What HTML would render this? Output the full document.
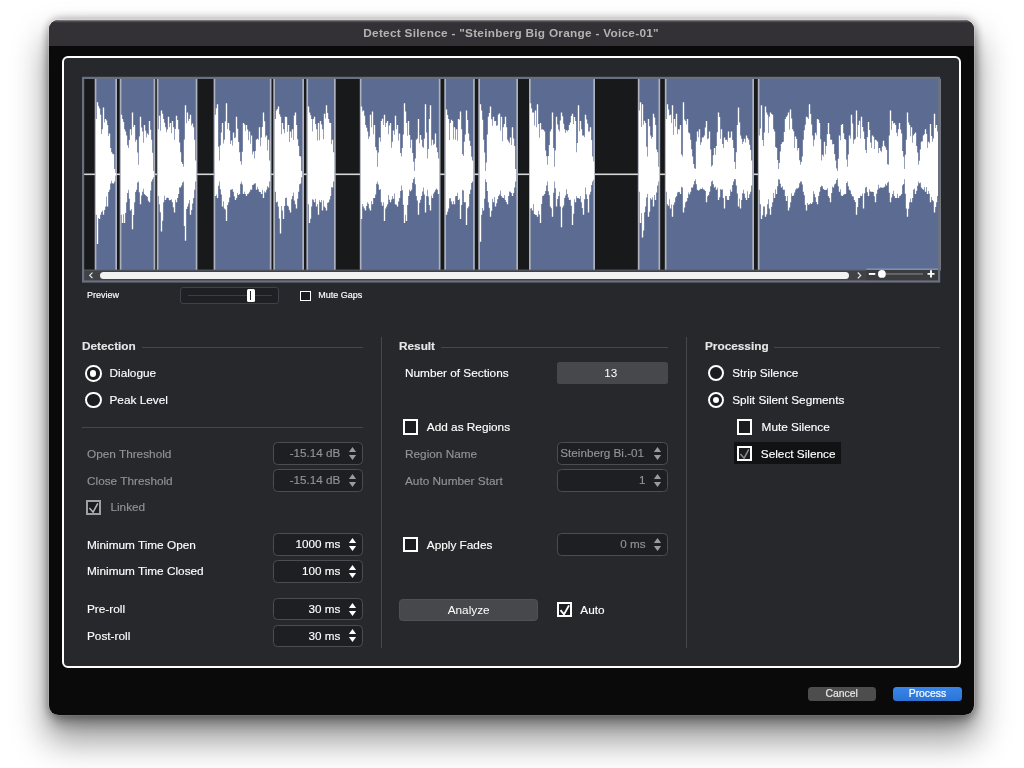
<!DOCTYPE html>
<html><head><meta charset="utf-8">
<style>
*{box-sizing:border-box;margin:0;padding:0}
html,body{width:1024px;height:768px;overflow:hidden;background:#fff;font-family:"Liberation Sans",sans-serif;}
#shadow{position:absolute;left:49.6px;top:20.3px;width:924.4px;height:694.5px;border-radius:9.5px;box-shadow:0 22px 34px 4px rgba(0,0,0,.40),0 9px 14px 0 rgba(0,0,0,.28),0 0 10px 1px rgba(0,0,0,.36);}
#win{position:absolute;left:49.3px;top:20px;width:925px;height:694.5px;background:#0a0a0a;border-radius:9.5px;overflow:hidden;
 box-shadow:0 -0.5px 0 0.7px rgba(255,255,255,.3);}
#tb{position:absolute;left:0;top:0;width:926px;height:26px;background:linear-gradient(#8d8b90 0,#58565b 1.2px,#333136 2.8px,#333136 100%);}
#tb span{position:absolute;left:-0.7px;width:925px;top:6px;text-align:center;font-weight:bold;font-size:11.8px;color:#b3b3b3;letter-spacing:0.28px}
#panel{position:absolute;left:61.5px;top:56.3px;width:899.1px;height:612.2px;border:2.25px solid #fff;border-radius:6px;background:#26282c;}
.abs{position:absolute}
.t,.f,.h{-webkit-text-stroke:0.15px}
.t{position:absolute;font-size:11.8px;color:#fff;white-space:nowrap;line-height:14px;height:14px}
.s{font-size:9px}
.g{color:#929396}
.h{position:absolute;font-size:11.8px;font-weight:bold;color:#e6e6e6;white-space:nowrap;line-height:14px;height:14px}
.ln{position:absolute;height:1px;background:#45474c}
.vl{position:absolute;width:1px;background:#45474c}
.f{position:absolute;width:90px;height:22.5px;border:1.8px solid #4b4d53;border-radius:4.5px;background:#1d1f22;font-size:11.7px;color:#fff;line-height:20.4px;text-align:right;padding-right:21.6px;white-space:nowrap}
.f.g{color:#929396}
.f svg{position:absolute;right:5.3px;top:2.9px}
.cb{position:absolute;width:15.4px;height:15.4px;border:2px solid #fff;background:#1b1c1f}
.cb svg{position:absolute;left:-2px;top:-2px}
.rd{position:absolute;width:16.4px;height:16.4px;border:2px solid #fff;border-radius:50%;background:#1b1c1f}
.rd.on::after{content:"";position:absolute;left:3.1px;top:3.1px;width:6.2px;height:6.2px;border-radius:50%;background:#fff}
.btn{-webkit-text-stroke:0.2px;position:absolute;height:14px;border-radius:3.5px;font-size:10.4px;line-height:14px;text-align:center;color:#e8e8e8}
</style></head><body><div id="root" style="position:absolute;left:0;top:0;width:1024px;height:768px;will-change:transform">
<div id="shadow"></div>
<div id="win">
 <div id="tb"><span>Detect Silence - "Steinberg Big Orange - Voice-01"</span></div>
</div>
<div id="panel"></div>

<svg class="abs" style="left:0;top:0" width="1024" height="768" viewBox="0 0 1024 768">
<rect x="83" y="78" width="857" height="204" fill="#18191b"/>
<rect x="84" y="173.5" width="856" height="1.6" fill="#d8d8d8"/>
<rect x="94.70" y="79" width="22.30" height="191.5" fill="#adb1bd"/>
<rect x="96.40" y="79" width="18.90" height="191.5" fill="#5b6b92"/>
<rect x="119.70" y="79" width="35.60" height="191.5" fill="#adb1bd"/>
<rect x="121.40" y="79" width="32.20" height="191.5" fill="#5b6b92"/>
<rect x="156.80" y="79" width="40.60" height="191.5" fill="#adb1bd"/>
<rect x="158.50" y="79" width="37.20" height="191.5" fill="#5b6b92"/>
<rect x="213.60" y="79" width="57.90" height="191.5" fill="#adb1bd"/>
<rect x="215.30" y="79" width="54.50" height="191.5" fill="#5b6b92"/>
<rect x="273.30" y="79" width="30.70" height="191.5" fill="#adb1bd"/>
<rect x="275.00" y="79" width="27.30" height="191.5" fill="#5b6b92"/>
<rect x="306.40" y="79" width="29.30" height="191.5" fill="#adb1bd"/>
<rect x="308.10" y="79" width="25.90" height="191.5" fill="#5b6b92"/>
<rect x="359.80" y="79" width="80.70" height="191.5" fill="#adb1bd"/>
<rect x="361.50" y="79" width="77.30" height="191.5" fill="#5b6b92"/>
<rect x="444.30" y="79" width="30.50" height="191.5" fill="#adb1bd"/>
<rect x="446.00" y="79" width="27.10" height="191.5" fill="#5b6b92"/>
<rect x="478.30" y="79" width="39.70" height="191.5" fill="#adb1bd"/>
<rect x="480.00" y="79" width="36.30" height="191.5" fill="#5b6b92"/>
<rect x="529.00" y="79" width="66.00" height="191.5" fill="#adb1bd"/>
<rect x="530.70" y="79" width="62.60" height="191.5" fill="#5b6b92"/>
<rect x="637.80" y="79" width="22.40" height="191.5" fill="#adb1bd"/>
<rect x="639.50" y="79" width="19.00" height="191.5" fill="#5b6b92"/>
<rect x="664.80" y="79" width="89.20" height="191.5" fill="#adb1bd"/>
<rect x="666.50" y="79" width="85.80" height="191.5" fill="#5b6b92"/>
<rect x="757.80" y="79" width="182.80" height="191.5" fill="#adb1bd"/>
<rect x="759.50" y="79" width="179.40" height="191.5" fill="#5b6b92"/>
<path fill="#fff" d="M95.82 118.9h1.36V214.7h-1.36zM96.82 102.2h1.36V243.9h-1.36zM97.82 106.2h1.36V218.0h-1.36zM98.82 108.5h1.36V218.9h-1.36zM99.82 114.7h1.36V214.7h-1.36zM100.82 133.9h1.36V211.9h-1.36zM101.82 129.3h1.36V210.6h-1.36zM102.82 107.4h1.36V214.7h-1.36zM103.82 122.6h1.36V209.9h-1.36zM104.82 118.9h1.36V206.4h-1.36zM105.82 120.6h1.36V196.4h-1.36zM106.82 125.1h1.36V206.4h-1.36zM107.82 136.0h1.36V191.9h-1.36zM108.82 133.5h1.36V189.7h-1.36zM109.82 148.1h1.36V183.5h-1.36zM110.82 152.2h1.36V180.7h-1.36zM111.82 153.7h1.36V183.3h-1.36zM112.82 154.3h1.36V183.5h-1.36zM113.82 168.9h1.36V181.4h-1.36zM114.82 173.1h1.36V175.6h-1.36z"/>
<path fill="#fff" d="M120.82 114.7h1.36V214.7h-1.36zM121.82 118.9h1.36V223.1h-1.36zM122.82 122.0h1.36V214.3h-1.36zM123.82 129.3h1.36V223.1h-1.36zM124.82 131.5h1.36V212.9h-1.36zM125.82 135.6h1.36V202.2h-1.36zM126.82 145.2h1.36V192.9h-1.36zM127.82 148.1h1.36V189.7h-1.36zM128.82 140.1h1.36V198.7h-1.36zM129.82 129.3h1.36V210.6h-1.36zM130.82 135.3h1.36V208.9h-1.36zM131.82 112.6h1.36V229.3h-1.36zM132.82 126.9h1.36V215.1h-1.36zM133.82 125.1h1.36V202.2h-1.36zM134.82 141.7h1.36V191.9h-1.36zM135.82 139.7h1.36V189.7h-1.36zM136.82 152.5h1.36V182.5h-1.36zM137.82 164.7h1.36V181.4h-1.36zM138.82 136.5h1.36V192.3h-1.36zM139.82 116.8h1.36V204.3h-1.36zM140.82 127.6h1.36V195.4h-1.36zM141.82 131.4h1.36V191.8h-1.36zM142.82 142.7h1.36V188.8h-1.36zM143.82 125.1h1.36V193.9h-1.36zM144.82 130.7h1.36V195.0h-1.36zM145.82 137.6h1.36V196.0h-1.36zM146.82 133.6h1.36V196.8h-1.36zM147.82 135.1h1.36V200.8h-1.36zM148.82 121.0h1.36V202.2h-1.36zM149.82 129.8h1.36V190.4h-1.36zM150.82 139.7h1.36V181.4h-1.36zM151.82 152.8h1.36V179.3h-1.36zM152.82 171.0h1.36V177.2h-1.36z"/>
<path fill="#fff" d="M157.82 129.3h1.36V196.0h-1.36zM158.82 115.8h1.36V204.3h-1.36zM159.82 130.7h1.36V212.3h-1.36zM160.82 110.6h1.36V231.4h-1.36zM161.82 113.8h1.36V220.8h-1.36zM162.82 118.9h1.36V202.2h-1.36zM163.82 122.7h1.36V195.7h-1.36zM164.82 127.2h1.36V200.1h-1.36zM165.82 132.3h1.36V198.1h-1.36zM166.82 129.4h1.36V197.5h-1.36zM167.82 116.8h1.36V198.1h-1.36zM168.82 127.3h1.36V200.2h-1.36zM169.82 123.1h1.36V200.1h-1.36zM170.82 133.3h1.36V199.3h-1.36zM171.82 121.0h1.36V202.2h-1.36zM172.82 127.2h1.36V207.2h-1.36zM173.82 139.7h1.36V212.6h-1.36zM174.82 128.9h1.36V199.7h-1.36zM175.82 115.8h1.36V202.2h-1.36zM176.82 119.9h1.36V198.0h-1.36zM177.82 129.3h1.36V193.9h-1.36zM178.82 142.5h1.36V187.3h-1.36zM179.82 152.2h1.36V187.6h-1.36zM180.82 161.9h1.36V185.4h-1.36zM181.82 164.1h1.36V182.6h-1.36zM182.82 166.8h1.36V181.4h-1.36zM183.82 139.5h1.36V225.9h-1.36zM184.82 105.3h1.36V240.8h-1.36zM185.82 123.2h1.36V209.1h-1.36zM186.82 112.6h1.36V206.4h-1.36zM187.82 121.0h1.36V203.5h-1.36zM188.82 118.9h1.36V200.1h-1.36zM189.82 114.7h1.36V214.7h-1.36zM190.82 125.4h1.36V210.1h-1.36zM191.82 123.5h1.36V203.4h-1.36zM192.82 127.2h1.36V198.1h-1.36zM193.82 139.7h1.36V189.7h-1.36zM194.82 160.6h1.36V181.4h-1.36z"/>
<path fill="#fff" d="M214.82 114.7h1.36V196.0h-1.36zM215.82 108.2h1.36V194.6h-1.36zM216.82 104.3h1.36V198.1h-1.36zM217.82 146.8h1.36V185.8h-1.36zM218.82 160.6h1.36V181.4h-1.36zM219.82 145.3h1.36V189.2h-1.36zM220.82 132.6h1.36V194.5h-1.36zM221.82 123.1h1.36V206.4h-1.36zM222.82 143.4h1.36V201.3h-1.36zM223.82 139.7h1.36V208.5h-1.36zM224.82 121.3h1.36V209.6h-1.36zM225.82 103.3h1.36V221.0h-1.36zM226.82 128.9h1.36V205.0h-1.36zM227.82 123.1h1.36V202.2h-1.36zM228.82 130.6h1.36V197.4h-1.36zM229.82 143.9h1.36V189.7h-1.36zM230.82 140.6h1.36V189.5h-1.36zM231.82 145.4h1.36V189.1h-1.36zM232.82 132.4h1.36V191.8h-1.36zM233.82 138.2h1.36V196.3h-1.36zM234.82 137.6h1.36V200.1h-1.36zM235.82 116.8h1.36V198.1h-1.36zM236.82 128.8h1.36V193.0h-1.36zM237.82 141.9h1.36V195.1h-1.36zM238.82 152.2h1.36V193.9h-1.36zM239.82 161.3h1.36V183.8h-1.36zM240.82 164.7h1.36V181.4h-1.36zM241.82 151.8h1.36V184.4h-1.36zM242.82 123.1h1.36V193.9h-1.36zM243.82 124.4h1.36V191.8h-1.36zM244.82 131.0h1.36V194.1h-1.36zM245.82 125.1h1.36V196.0h-1.36zM246.82 129.5h1.36V193.9h-1.36zM247.82 140.3h1.36V193.6h-1.36zM248.82 131.4h1.36V191.8h-1.36zM249.82 143.7h1.36V189.5h-1.36zM250.82 135.6h1.36V189.7h-1.36zM251.82 154.4h1.36V184.9h-1.36zM252.82 151.6h1.36V184.5h-1.36zM253.82 158.5h1.36V183.5h-1.36zM254.82 151.0h1.36V183.3h-1.36zM255.82 139.7h1.36V189.7h-1.36zM256.82 138.8h1.36V186.8h-1.36zM257.82 139.8h1.36V189.3h-1.36zM258.82 127.2h1.36V191.8h-1.36zM259.82 146.2h1.36V192.0h-1.36zM260.82 137.6h1.36V193.9h-1.36zM261.82 126.9h1.36V189.8h-1.36zM262.82 112.6h1.36V198.1h-1.36zM263.82 121.2h1.36V191.2h-1.36zM264.82 137.3h1.36V192.4h-1.36zM265.82 135.6h1.36V189.7h-1.36zM266.82 150.5h1.36V186.1h-1.36zM267.82 139.7h1.36V187.6h-1.36zM268.82 160.6h1.36V181.4h-1.36z"/>
<path fill="#fff" d="M274.82 118.9h1.36V191.8h-1.36zM275.82 110.6h1.36V202.2h-1.36zM276.82 108.9h1.36V201.6h-1.36zM277.82 106.4h1.36V206.4h-1.36zM278.82 114.2h1.36V218.4h-1.36zM279.82 116.8h1.36V233.5h-1.36zM280.82 134.3h1.36V205.9h-1.36zM281.82 123.1h1.36V210.6h-1.36zM282.82 129.3h1.36V218.9h-1.36zM283.82 133.3h1.36V206.1h-1.36zM284.82 116.8h1.36V198.1h-1.36zM285.82 117.1h1.36V197.6h-1.36zM286.82 131.8h1.36V205.5h-1.36zM287.82 125.1h1.36V206.4h-1.36zM288.82 142.0h1.36V210.1h-1.36zM289.82 131.4h1.36V212.6h-1.36zM290.82 137.8h1.36V199.2h-1.36zM291.82 129.3h1.36V196.0h-1.36zM292.82 140.1h1.36V192.4h-1.36zM293.82 115.6h1.36V200.5h-1.36zM294.82 112.6h1.36V204.3h-1.36zM295.82 125.1h1.36V208.5h-1.36zM296.82 139.2h1.36V198.7h-1.36zM297.82 146.0h1.36V191.8h-1.36zM298.82 156.0h1.36V184.2h-1.36zM299.82 156.4h1.36V183.5h-1.36zM300.82 171.0h1.36V177.2h-1.36z"/>
<path fill="#fff" d="M307.82 106.4h1.36V204.3h-1.36zM308.82 112.6h1.36V223.1h-1.36zM309.82 115.2h1.36V218.7h-1.36zM310.82 118.9h1.36V206.4h-1.36zM311.82 131.5h1.36V199.2h-1.36zM312.82 119.1h1.36V199.8h-1.36zM313.82 116.8h1.36V202.2h-1.36zM314.82 124.1h1.36V198.8h-1.36zM315.82 129.3h1.36V206.4h-1.36zM316.82 140.5h1.36V204.0h-1.36zM317.82 123.1h1.36V214.7h-1.36zM318.82 140.3h1.36V200.2h-1.36zM319.82 121.0h1.36V202.2h-1.36zM320.82 124.6h1.36V200.1h-1.36zM321.82 129.3h1.36V210.6h-1.36zM322.82 139.3h1.36V200.5h-1.36zM323.82 113.7h1.36V206.4h-1.36zM324.82 118.5h1.36V207.8h-1.36zM325.82 105.3h1.36V210.6h-1.36zM326.82 113.1h1.36V202.8h-1.36zM327.82 118.9h1.36V202.2h-1.36zM328.82 122.7h1.36V199.6h-1.36zM329.82 123.1h1.36V196.0h-1.36zM330.82 144.2h1.36V187.0h-1.36zM331.82 139.7h1.36V187.6h-1.36zM332.82 152.2h1.36V181.4h-1.36z"/>
<path fill="#fff" d="M360.82 106.4h1.36V218.9h-1.36zM361.82 111.4h1.36V204.0h-1.36zM362.82 110.6h1.36V206.4h-1.36zM363.82 115.8h1.36V208.4h-1.36zM364.82 125.1h1.36V210.6h-1.36zM365.82 127.8h1.36V206.1h-1.36zM366.82 131.4h1.36V202.2h-1.36zM367.82 138.9h1.36V203.8h-1.36zM368.82 136.6h1.36V208.6h-1.36zM369.82 114.7h1.36V210.6h-1.36zM370.82 127.3h1.36V201.0h-1.36zM371.82 111.6h1.36V204.3h-1.36zM372.82 134.2h1.36V198.0h-1.36zM373.82 125.1h1.36V198.1h-1.36zM374.82 146.9h1.36V194.5h-1.36zM375.82 150.3h1.36V183.7h-1.36zM376.82 166.8h1.36V181.4h-1.36zM377.82 152.5h1.36V184.6h-1.36zM378.82 137.6h1.36V189.7h-1.36zM379.82 141.7h1.36V189.1h-1.36zM380.82 121.0h1.36V202.2h-1.36zM381.82 118.7h1.36V205.8h-1.36zM382.82 125.1h1.36V202.3h-1.36zM383.82 114.7h1.36V221.0h-1.36zM384.82 127.1h1.36V208.4h-1.36zM385.82 123.0h1.36V206.6h-1.36zM386.82 121.0h1.36V204.3h-1.36zM387.82 134.3h1.36V195.0h-1.36zM388.82 125.4h1.36V199.7h-1.36zM389.82 123.1h1.36V202.2h-1.36zM390.82 147.8h1.36V199.5h-1.36zM391.82 141.8h1.36V196.0h-1.36zM392.82 130.6h1.36V198.8h-1.36zM393.82 134.7h1.36V193.6h-1.36zM394.82 115.8h1.36V204.3h-1.36zM395.82 129.3h1.36V204.8h-1.36zM396.82 125.1h1.36V206.4h-1.36zM397.82 140.4h1.36V201.5h-1.36zM398.82 133.5h1.36V198.1h-1.36zM399.82 153.0h1.36V191.0h-1.36zM400.82 156.4h1.36V185.6h-1.36zM401.82 147.9h1.36V190.2h-1.36zM402.82 134.4h1.36V204.8h-1.36zM403.82 103.3h1.36V223.1h-1.36zM404.82 111.6h1.36V214.8h-1.36zM405.82 123.1h1.36V221.0h-1.36zM406.82 135.8h1.36V205.1h-1.36zM407.82 121.0h1.36V196.0h-1.36zM408.82 135.0h1.36V189.5h-1.36zM409.82 147.9h1.36V191.3h-1.36zM410.82 139.7h1.36V189.7h-1.36zM411.82 153.0h1.36V182.8h-1.36zM412.82 161.7h1.36V179.1h-1.36zM413.82 171.0h1.36V177.2h-1.36zM414.82 158.6h1.36V184.3h-1.36zM415.82 139.7h1.36V196.0h-1.36zM416.82 138.6h1.36V200.6h-1.36zM417.82 118.9h1.36V214.7h-1.36zM418.82 143.3h1.36V202.8h-1.36zM419.82 135.1h1.36V199.7h-1.36zM420.82 139.7h1.36V196.0h-1.36zM421.82 146.7h1.36V191.6h-1.36zM422.82 148.1h1.36V187.6h-1.36zM423.82 138.7h1.36V194.4h-1.36zM424.82 104.3h1.36V212.6h-1.36zM425.82 132.5h1.36V195.9h-1.36zM426.82 158.5h1.36V189.7h-1.36zM427.82 149.1h1.36V196.4h-1.36zM428.82 119.1h1.36V205.1h-1.36zM429.82 105.3h1.36V210.6h-1.36zM430.82 145.4h1.36V195.4h-1.36zM431.82 139.7h1.36V198.1h-1.36zM432.82 145.0h1.36V193.4h-1.36zM433.82 143.8h1.36V191.8h-1.36zM434.82 133.5h1.36V189.7h-1.36zM435.82 147.4h1.36V188.6h-1.36zM436.82 152.2h1.36V189.7h-1.36zM437.82 158.5h1.36V193.9h-1.36z"/>
<path fill="#fff" d="M445.82 109.5h1.36V214.7h-1.36zM446.82 115.0h1.36V211.7h-1.36zM447.82 118.9h1.36V208.5h-1.36zM448.82 140.0h1.36V198.5h-1.36zM449.82 123.1h1.36V198.1h-1.36zM450.82 119.8h1.36V201.4h-1.36zM451.82 121.0h1.36V204.3h-1.36zM452.82 139.6h1.36V200.9h-1.36zM453.82 127.2h1.36V204.3h-1.36zM454.82 139.7h1.36V196.2h-1.36zM455.82 129.3h1.36V196.0h-1.36zM456.82 140.8h1.36V192.8h-1.36zM457.82 118.9h1.36V200.1h-1.36zM458.82 119.8h1.36V198.7h-1.36zM459.82 111.6h1.36V218.9h-1.36zM460.82 129.2h1.36V205.1h-1.36zM461.82 154.3h1.36V189.7h-1.36zM462.82 156.0h1.36V190.4h-1.36zM463.82 141.8h1.36V202.2h-1.36zM464.82 134.5h1.36V201.9h-1.36zM465.82 110.6h1.36V225.1h-1.36zM466.82 120.1h1.36V208.2h-1.36zM467.82 133.5h1.36V206.4h-1.36zM468.82 140.8h1.36V193.9h-1.36zM469.82 146.0h1.36V189.7h-1.36zM470.82 156.7h1.36V182.9h-1.36zM471.82 160.6h1.36V181.4h-1.36z"/>
<path fill="#fff" d="M479.82 104.3h1.36V241.8h-1.36zM480.82 110.6h1.36V214.7h-1.36zM481.82 119.7h1.36V208.1h-1.36zM482.82 139.7h1.36V210.6h-1.36zM483.82 152.6h1.36V198.7h-1.36zM484.82 171.0h1.36V179.3h-1.36zM485.82 162.5h1.36V182.0h-1.36zM486.82 134.5h1.36V190.9h-1.36zM487.82 116.8h1.36V202.2h-1.36zM488.82 113.0h1.36V207.8h-1.36zM489.82 106.4h1.36V216.8h-1.36zM490.82 119.3h1.36V210.7h-1.36zM491.82 125.7h1.36V198.7h-1.36zM492.82 116.8h1.36V202.2h-1.36zM493.82 121.3h1.36V197.0h-1.36zM494.82 121.0h1.36V206.4h-1.36zM495.82 126.0h1.36V203.2h-1.36zM496.82 125.2h1.36V199.3h-1.36zM497.82 114.7h1.36V196.0h-1.36zM498.82 113.4h1.36V194.5h-1.36zM499.82 130.4h1.36V190.5h-1.36zM500.82 116.8h1.36V196.0h-1.36zM501.82 141.2h1.36V197.6h-1.36zM502.82 127.2h1.36V198.1h-1.36zM503.82 124.0h1.36V195.0h-1.36zM504.82 116.8h1.36V200.1h-1.36zM505.82 127.2h1.36V201.9h-1.36zM506.82 139.7h1.36V204.3h-1.36zM507.82 141.5h1.36V196.1h-1.36zM508.82 143.2h1.36V191.4h-1.36zM509.82 137.6h1.36V191.8h-1.36zM510.82 144.9h1.36V193.1h-1.36zM511.82 127.2h1.36V196.0h-1.36zM512.82 138.5h1.36V193.0h-1.36zM513.82 146.0h1.36V187.6h-1.36zM514.82 168.9h1.36V181.4h-1.36z"/>
<path fill="#fff" d="M529.82 103.3h1.36V208.5h-1.36zM530.82 108.5h1.36V208.1h-1.36zM531.82 112.6h1.36V210.6h-1.36zM532.82 112.6h1.36V204.0h-1.36zM533.82 125.5h1.36V213.9h-1.36zM534.82 110.6h1.36V214.7h-1.36zM535.82 127.3h1.36V215.1h-1.36zM536.82 104.3h1.36V216.8h-1.36zM537.82 124.0h1.36V210.7h-1.36zM538.82 137.8h1.36V214.6h-1.36zM539.82 123.1h1.36V223.1h-1.36zM540.82 129.8h1.36V203.9h-1.36zM541.82 129.3h1.36V196.0h-1.36zM542.82 130.0h1.36V195.5h-1.36zM543.82 131.4h1.36V193.9h-1.36zM544.82 150.4h1.36V190.9h-1.36zM545.82 156.3h1.36V185.6h-1.36zM546.82 164.7h1.36V181.4h-1.36zM547.82 155.9h1.36V191.2h-1.36zM548.82 144.9h1.36V195.2h-1.36zM549.82 131.4h1.36V206.4h-1.36zM550.82 129.2h1.36V208.2h-1.36zM551.82 112.6h1.36V216.8h-1.36zM552.82 147.9h1.36V192.7h-1.36zM553.82 166.8h1.36V181.4h-1.36zM554.82 150.4h1.36V188.3h-1.36zM555.82 116.8h1.36V206.4h-1.36zM556.82 124.5h1.36V199.1h-1.36zM557.82 129.4h1.36V196.0h-1.36zM558.82 131.4h1.36V191.8h-1.36zM559.82 120.6h1.36V206.4h-1.36zM560.82 112.6h1.36V227.2h-1.36zM561.82 116.2h1.36V207.5h-1.36zM562.82 123.7h1.36V205.5h-1.36zM563.82 129.3h1.36V198.1h-1.36zM564.82 133.0h1.36V195.4h-1.36zM565.82 130.3h1.36V189.3h-1.36zM566.82 131.4h1.36V193.9h-1.36zM567.82 130.1h1.36V197.6h-1.36zM568.82 125.1h1.36V200.1h-1.36zM569.82 122.6h1.36V199.7h-1.36zM570.82 115.9h1.36V205.7h-1.36zM571.82 113.7h1.36V225.1h-1.36zM572.82 124.1h1.36V213.8h-1.36zM573.82 117.1h1.36V199.2h-1.36zM574.82 121.0h1.36V202.2h-1.36zM575.82 152.2h1.36V196.0h-1.36zM576.82 143.1h1.36V197.9h-1.36zM577.82 105.3h1.36V198.1h-1.36zM578.82 131.2h1.36V198.8h-1.36zM579.82 120.9h1.36V196.0h-1.36zM580.82 129.3h1.36V202.2h-1.36zM581.82 135.5h1.36V208.1h-1.36zM582.82 135.6h1.36V214.7h-1.36zM583.82 137.3h1.36V199.3h-1.36zM584.82 114.7h1.36V187.6h-1.36zM585.82 119.4h1.36V194.2h-1.36zM586.82 123.7h1.36V199.0h-1.36zM587.82 131.4h1.36V212.6h-1.36zM588.82 131.5h1.36V194.5h-1.36zM589.82 127.2h1.36V191.8h-1.36zM590.82 140.1h1.36V184.9h-1.36zM591.82 156.4h1.36V181.4h-1.36zM592.82 161.5h1.36V179.8h-1.36z"/>
<path fill="#fff" d="M638.82 110.6h1.36V191.8h-1.36zM639.82 102.2h1.36V223.1h-1.36zM640.82 127.0h1.36V213.1h-1.36zM641.82 104.3h1.36V237.6h-1.36zM642.82 124.7h1.36V230.4h-1.36zM643.82 120.8h1.36V212.3h-1.36zM644.82 123.1h1.36V206.4h-1.36zM645.82 146.7h1.36V197.6h-1.36zM646.82 156.4h1.36V193.9h-1.36zM647.82 118.9h1.36V216.8h-1.36zM648.82 126.3h1.36V211.7h-1.36zM649.82 135.6h1.36V198.1h-1.36zM650.82 138.8h1.36V199.5h-1.36zM651.82 137.1h1.36V197.2h-1.36zM652.82 113.7h1.36V206.4h-1.36zM653.82 117.4h1.36V195.0h-1.36zM654.82 125.1h1.36V200.1h-1.36zM655.82 149.4h1.36V192.4h-1.36zM656.82 152.2h1.36V185.6h-1.36zM657.82 166.8h1.36V181.4h-1.36z"/>
<path fill="#fff" d="M665.82 118.9h1.36V191.8h-1.36zM666.82 104.3h1.36V204.3h-1.36zM667.82 109.6h1.36V205.7h-1.36zM668.82 115.6h1.36V199.3h-1.36zM669.82 114.7h1.36V208.5h-1.36zM670.82 122.9h1.36V204.5h-1.36zM671.82 105.3h1.36V216.8h-1.36zM672.82 134.7h1.36V204.7h-1.36zM673.82 118.9h1.36V202.2h-1.36zM674.82 126.7h1.36V197.6h-1.36zM675.82 113.7h1.36V196.0h-1.36zM676.82 134.2h1.36V192.5h-1.36zM677.82 129.3h1.36V191.8h-1.36zM678.82 129.4h1.36V191.9h-1.36zM679.82 125.1h1.36V193.9h-1.36zM680.82 154.5h1.36V186.7h-1.36zM681.82 156.4h1.36V187.6h-1.36zM682.82 102.2h1.36V212.6h-1.36zM683.82 119.6h1.36V207.6h-1.36zM684.82 121.0h1.36V202.2h-1.36zM685.82 124.5h1.36V201.2h-1.36zM686.82 118.9h1.36V198.1h-1.36zM687.82 132.4h1.36V192.4h-1.36zM688.82 133.6h1.36V194.2h-1.36zM689.82 139.7h1.36V191.8h-1.36zM690.82 149.2h1.36V187.4h-1.36zM691.82 156.4h1.36V187.6h-1.36zM692.82 164.1h1.36V184.5h-1.36zM693.82 168.2h1.36V180.9h-1.36zM694.82 168.9h1.36V179.3h-1.36zM695.82 141.5h1.36V184.2h-1.36zM696.82 131.4h1.36V189.7h-1.36zM697.82 137.3h1.36V190.4h-1.36zM698.82 129.3h1.36V189.7h-1.36zM699.82 144.9h1.36V188.5h-1.36zM700.82 142.2h1.36V189.0h-1.36zM701.82 137.6h1.36V187.6h-1.36zM702.82 137.4h1.36V189.3h-1.36zM703.82 135.6h1.36V189.7h-1.36zM704.82 127.4h1.36V191.1h-1.36zM705.82 121.0h1.36V202.2h-1.36zM706.82 139.2h1.36V196.3h-1.36zM707.82 138.5h1.36V195.1h-1.36zM708.82 131.4h1.36V191.8h-1.36zM709.82 149.4h1.36V186.2h-1.36zM710.82 166.8h1.36V181.4h-1.36zM711.82 165.2h1.36V180.6h-1.36zM712.82 155.3h1.36V184.3h-1.36zM713.82 148.1h1.36V187.6h-1.36zM714.82 154.8h1.36V186.5h-1.36zM715.82 146.0h1.36V189.7h-1.36zM716.82 132.2h1.36V187.8h-1.36zM717.82 112.6h1.36V200.1h-1.36zM718.82 117.1h1.36V197.3h-1.36zM719.82 138.7h1.36V189.0h-1.36zM720.82 129.3h1.36V189.7h-1.36zM721.82 143.9h1.36V189.2h-1.36zM722.82 148.1h1.36V198.0h-1.36zM723.82 137.6h1.36V208.5h-1.36zM724.82 139.9h1.36V196.1h-1.36zM725.82 139.7h1.36V196.0h-1.36zM726.82 141.8h1.36V199.7h-1.36zM727.82 131.4h1.36V200.1h-1.36zM728.82 138.0h1.36V196.0h-1.36zM729.82 137.5h1.36V189.5h-1.36zM730.82 131.4h1.36V191.8h-1.36zM731.82 139.9h1.36V184.9h-1.36zM732.82 148.1h1.36V181.4h-1.36zM733.82 162.1h1.36V179.1h-1.36zM734.82 168.9h1.36V179.3h-1.36zM735.82 152.3h1.36V185.6h-1.36zM736.82 124.9h1.36V193.4h-1.36zM737.82 107.4h1.36V206.4h-1.36zM738.82 122.6h1.36V198.7h-1.36zM739.82 135.6h1.36V208.5h-1.36zM740.82 138.8h1.36V200.0h-1.36zM741.82 144.1h1.36V193.2h-1.36zM742.82 141.8h1.36V189.7h-1.36zM743.82 138.7h1.36V193.7h-1.36zM744.82 142.6h1.36V197.8h-1.36zM745.82 135.6h1.36V200.1h-1.36zM746.82 138.0h1.36V191.2h-1.36zM747.82 139.7h1.36V198.1h-1.36zM748.82 144.7h1.36V194.3h-1.36zM749.82 150.1h1.36V191.8h-1.36zM750.82 160.6h1.36V185.6h-1.36z"/>
<path fill="#fff" d="M758.82 135.6h1.36V189.7h-1.36zM759.82 128.5h1.36V204.2h-1.36zM760.82 105.3h1.36V218.9h-1.36zM761.82 140.0h1.36V215.3h-1.36zM762.82 146.0h1.36V206.4h-1.36zM763.82 132.4h1.36V206.4h-1.36zM764.82 106.4h1.36V216.8h-1.36zM765.82 112.5h1.36V214.3h-1.36zM766.82 114.7h1.36V204.3h-1.36zM767.82 133.0h1.36V199.2h-1.36zM768.82 116.7h1.36V208.4h-1.36zM769.82 112.6h1.36V214.7h-1.36zM770.82 114.0h1.36V206.8h-1.36zM771.82 114.7h1.36V202.2h-1.36zM772.82 129.2h1.36V193.1h-1.36zM773.82 131.4h1.36V198.1h-1.36zM774.82 146.9h1.36V189.3h-1.36zM775.82 148.1h1.36V193.9h-1.36zM776.82 159.9h1.36V186.3h-1.36zM777.82 168.9h1.36V179.3h-1.36zM778.82 162.9h1.36V179.5h-1.36zM779.82 151.6h1.36V183.8h-1.36zM780.82 143.9h1.36V187.6h-1.36zM781.82 142.2h1.36V186.3h-1.36zM782.82 141.8h1.36V189.7h-1.36zM783.82 132.0h1.36V189.7h-1.36zM784.82 118.9h1.36V196.0h-1.36zM785.82 117.0h1.36V201.1h-1.36zM786.82 115.4h1.36V196.0h-1.36zM787.82 112.6h1.36V210.6h-1.36zM788.82 129.6h1.36V207.5h-1.36zM789.82 109.5h1.36V202.2h-1.36zM790.82 118.4h1.36V193.3h-1.36zM791.82 129.3h1.36V196.0h-1.36zM792.82 131.3h1.36V195.4h-1.36zM793.82 147.9h1.36V192.6h-1.36zM794.82 136.6h1.36V189.7h-1.36zM795.82 138.9h1.36V188.2h-1.36zM796.82 150.6h1.36V188.4h-1.36zM797.82 148.1h1.36V187.6h-1.36zM798.82 160.2h1.36V183.3h-1.36zM799.82 164.7h1.36V181.4h-1.36zM800.82 161.9h1.36V181.4h-1.36zM801.82 156.5h1.36V184.6h-1.36zM802.82 139.7h1.36V191.8h-1.36zM803.82 130.3h1.36V195.2h-1.36zM804.82 124.7h1.36V204.7h-1.36zM805.82 116.8h1.36V210.6h-1.36zM806.82 117.5h1.36V203.0h-1.36zM807.82 119.0h1.36V204.8h-1.36zM808.82 104.3h1.36V204.3h-1.36zM809.82 114.1h1.36V203.0h-1.36zM810.82 124.5h1.36V204.0h-1.36zM811.82 135.6h1.36V202.2h-1.36zM812.82 146.3h1.36V191.2h-1.36zM813.82 139.7h1.36V193.9h-1.36zM814.82 132.8h1.36V197.3h-1.36zM815.82 135.3h1.36V202.0h-1.36zM816.82 118.9h1.36V204.3h-1.36zM817.82 119.8h1.36V196.1h-1.36zM818.82 123.1h1.36V191.8h-1.36zM819.82 139.2h1.36V186.9h-1.36zM820.82 160.6h1.36V185.6h-1.36zM821.82 154.8h1.36V186.3h-1.36zM822.82 156.4h1.36V188.9h-1.36zM823.82 141.8h1.36V189.7h-1.36zM824.82 154.2h1.36V190.0h-1.36zM825.82 146.0h1.36V189.7h-1.36zM826.82 134.3h1.36V187.9h-1.36zM827.82 123.1h1.36V196.0h-1.36zM828.82 134.1h1.36V197.7h-1.36zM829.82 139.7h1.36V202.2h-1.36zM830.82 139.8h1.36V192.9h-1.36zM831.82 144.4h1.36V186.5h-1.36zM832.82 143.9h1.36V187.6h-1.36zM833.82 154.1h1.36V184.5h-1.36zM834.82 160.6h1.36V183.5h-1.36zM835.82 168.6h1.36V180.1h-1.36zM836.82 171.0h1.36V178.3h-1.36zM837.82 158.7h1.36V186.2h-1.36zM838.82 135.6h1.36V191.8h-1.36zM839.82 140.3h1.36V189.3h-1.36zM840.82 125.1h1.36V195.5h-1.36zM841.82 124.1h1.36V196.0h-1.36zM842.82 133.2h1.36V194.8h-1.36zM843.82 139.0h1.36V193.9h-1.36zM844.82 139.7h1.36V193.9h-1.36zM845.82 159.5h1.36V183.1h-1.36zM846.82 166.8h1.36V181.4h-1.36zM847.82 154.5h1.36V186.2h-1.36zM848.82 135.6h1.36V189.7h-1.36zM849.82 138.7h1.36V190.4h-1.36zM850.82 114.7h1.36V193.9h-1.36zM851.82 123.4h1.36V196.3h-1.36zM852.82 143.8h1.36V196.5h-1.36zM853.82 139.7h1.36V200.1h-1.36zM854.82 138.8h1.36V202.0h-1.36zM855.82 110.6h1.36V214.7h-1.36zM856.82 136.9h1.36V207.0h-1.36zM857.82 125.1h1.36V198.1h-1.36zM858.82 120.8h1.36V197.9h-1.36zM859.82 138.4h1.36V195.5h-1.36zM860.82 116.8h1.36V196.0h-1.36zM861.82 127.1h1.36V193.5h-1.36zM862.82 131.4h1.36V208.5h-1.36zM863.82 139.0h1.36V193.2h-1.36zM864.82 150.1h1.36V187.6h-1.36zM865.82 153.1h1.36V186.8h-1.36zM866.82 137.2h1.36V192.3h-1.36zM867.82 122.0h1.36V196.0h-1.36zM868.82 130.1h1.36V189.3h-1.36zM869.82 142.4h1.36V191.5h-1.36zM870.82 148.1h1.36V191.8h-1.36zM871.82 135.6h1.36V191.8h-1.36zM872.82 136.8h1.36V192.1h-1.36zM873.82 148.9h1.36V196.3h-1.36zM874.82 139.7h1.36V202.2h-1.36zM875.82 140.4h1.36V193.8h-1.36zM876.82 141.8h1.36V189.7h-1.36zM877.82 153.0h1.36V184.8h-1.36zM878.82 147.9h1.36V188.2h-1.36zM879.82 150.8h1.36V187.2h-1.36zM880.82 152.2h1.36V187.6h-1.36zM881.82 146.6h1.36V187.7h-1.36zM882.82 140.8h1.36V187.6h-1.36zM883.82 145.7h1.36V186.7h-1.36zM884.82 147.4h1.36V183.8h-1.36zM885.82 150.1h1.36V185.6h-1.36zM886.82 164.3h1.36V182.8h-1.36zM887.82 164.7h1.36V181.4h-1.36zM888.82 135.5h1.36V192.8h-1.36zM889.82 110.6h1.36V202.2h-1.36zM890.82 129.7h1.36V197.5h-1.36zM891.82 121.0h1.36V193.9h-1.36zM892.82 123.7h1.36V190.8h-1.36zM893.82 123.1h1.36V195.9h-1.36zM894.82 125.1h1.36V198.1h-1.36zM895.82 132.8h1.36V197.9h-1.36zM896.82 136.3h1.36V193.7h-1.36zM897.82 129.3h1.36V198.1h-1.36zM898.82 123.1h1.36V196.0h-1.36zM899.82 129.4h1.36V195.5h-1.36zM900.82 133.5h1.36V193.9h-1.36zM901.82 150.9h1.36V185.3h-1.36zM902.82 156.7h1.36V184.1h-1.36zM903.82 168.9h1.36V179.3h-1.36zM904.82 154.8h1.36V193.8h-1.36zM905.82 139.8h1.36V208.4h-1.36zM906.82 112.6h1.36V216.8h-1.36zM907.82 122.4h1.36V208.7h-1.36zM908.82 125.1h1.36V202.2h-1.36zM909.82 136.2h1.36V198.4h-1.36zM910.82 127.2h1.36V202.2h-1.36zM911.82 142.8h1.36V198.0h-1.36zM912.82 135.6h1.36V189.7h-1.36zM913.82 133.9h1.36V188.4h-1.36zM914.82 132.4h1.36V193.9h-1.36zM915.82 145.9h1.36V190.8h-1.36zM916.82 152.4h1.36V185.7h-1.36zM917.82 164.7h1.36V181.4h-1.36zM918.82 160.7h1.36V183.2h-1.36zM919.82 149.6h1.36V182.5h-1.36zM920.82 141.8h1.36V187.6h-1.36zM921.82 141.2h1.36V188.8h-1.36zM922.82 135.6h1.36V189.7h-1.36zM923.82 134.2h1.36V187.0h-1.36zM924.82 129.3h1.36V191.8h-1.36zM925.82 134.0h1.36V186.9h-1.36zM926.82 148.1h1.36V193.9h-1.36zM927.82 141.8h1.36V191.1h-1.36zM928.82 143.2h1.36V193.8h-1.36zM929.82 124.1h1.36V202.2h-1.36zM930.82 136.1h1.36V197.1h-1.36zM931.82 141.8h1.36V200.1h-1.36zM932.82 138.4h1.36V201.2h-1.36zM933.82 113.7h1.36V212.6h-1.36zM934.82 128.0h1.36V207.0h-1.36zM935.82 125.1h1.36V202.2h-1.36zM936.82 131.4h1.36V196.0h-1.36zM937.82 144.5h1.36V194.3h-1.36z"/>
<rect x="84" y="270" width="855" height="11.5" fill="#404246"/>
<rect x="84" y="269.6" width="782" height="0.9" fill="#5d6068"/>
<rect x="100" y="271.9" width="749" height="7" rx="3.5" fill="#f2f2f2"/>
<path d="M92.5 272.6 L89.7 275.4 L92.5 278.2" fill="none" stroke="#e8e8e8" stroke-width="1.2"/>
<path d="M857.8 272.5 L860.7 275.4 L857.8 278.3" fill="none" stroke="#e8e8e8" stroke-width="1.2"/>
<rect x="866.4" y="268.4" width="72" height="1.6" fill="#7f8eb2"/>
<rect x="866.4" y="270" width="72" height="10.6" fill="#3b3c40"/>
<rect x="868.8" y="273" width="6.5" height="1.9" fill="#fff"/>
<rect x="884" y="273" width="39" height="1.9" fill="#66676b"/>
<circle cx="881.9" cy="273.9" r="3.9" fill="#fff"/>
<path d="M927.5 273.9 H934.5 M931 270.3 V277.4" stroke="#fff" stroke-width="1.9" fill="none"/>
<rect x="83.1" y="77.9" width="856.0" height="203.6" fill="none" stroke="#69707f" stroke-width="2.2"/>
</svg>

<!-- preview row -->
<div class="t s" style="left:87px;top:288.2px">Preview</div>
<div class="abs" style="left:180px;top:287px;width:99px;height:17px;border:1px solid #3f4248;border-radius:3px;background:#1e2023"></div>
<div class="abs" style="left:188px;top:295px;width:84px;height:1px;background:#3c3e43"></div>
<div class="abs" style="left:246.5px;top:289px;width:8px;height:13px;background:#fff;border-radius:1.5px"></div>
<div class="abs" style="left:250px;top:291px;width:1px;height:9px;background:#222"></div>
<div class="cb" style="left:299.6px;top:290.6px;width:11.2px;height:10.6px;border-width:1px"></div>
<div class="t s" style="left:318.3px;top:288.2px">Mute Gaps</div>

<!-- Detection -->
<div class="h" style="left:82px;top:338.6px">Detection</div>
<div class="ln" style="left:142px;top:347px;width:221px"></div>
<div class="rd on" style="left:85.2px;top:365.3px"></div><div class="t" style="left:109.5px;top:365.9px">Dialogue</div>
<div class="rd" style="left:85.2px;top:392px"></div><div class="t" style="left:109.5px;top:393.4px">Peak Level</div>
<div class="ln" style="left:82px;top:427px;width:281px"></div>
<div class="t g" style="left:87px;top:446.8px">Open Threshold</div><div class="f g" style="left:273px;top:442.3px">-15.14 dB<svg width="9" height="15"><path d="M4.5 1.1 L8.1 6.1 H0.9 Z M4.5 13.9 L8.1 8.9 H0.9 Z" fill="#9a9b9e"/></svg></div>
<div class="t g" style="left:87px;top:473.7px">Close Threshold</div><div class="f g" style="left:273px;top:469.2px">-15.14 dB<svg width="9" height="15"><path d="M4.5 1.1 L8.1 6.1 H0.9 Z M4.5 13.9 L8.1 8.9 H0.9 Z" fill="#9a9b9e"/></svg></div>
<div class="cb" style="left:85.7px;top:499.6px;border-color:#a0a0a3"><svg width="15.5" height="15.5"><path d="M3.4 8 L7.1 12.2 L11.8 3.3" fill="none" stroke="#b8b8ba" stroke-width="1.5"/></svg></div><div class="t g" style="left:110.4px;top:500.4px">Linked</div>
<div class="t" style="left:87px;top:537.8px">Minimum Time Open</div><div class="f" style="left:273px;top:533.4px">1000 ms<svg width="9" height="15"><path d="M4.5 1.1 L8.1 6.1 H0.9 Z M4.5 13.9 L8.1 8.9 H0.9 Z" fill="#fff"/></svg></div>
<div class="t" style="left:87px;top:564.4px">Minimum Time Closed</div><div class="f" style="left:273px;top:560.2px">100 ms<svg width="9" height="15"><path d="M4.5 1.1 L8.1 6.1 H0.9 Z M4.5 13.9 L8.1 8.9 H0.9 Z" fill="#fff"/></svg></div>
<div class="t" style="left:87px;top:602.3px">Pre-roll</div><div class="f" style="left:273px;top:597.9px">30 ms<svg width="9" height="15"><path d="M4.5 1.1 L8.1 6.1 H0.9 Z M4.5 13.9 L8.1 8.9 H0.9 Z" fill="#fff"/></svg></div>
<div class="t" style="left:87px;top:629.1px">Post-roll</div><div class="f" style="left:273px;top:624.6px">30 ms<svg width="9" height="15"><path d="M4.5 1.1 L8.1 6.1 H0.9 Z M4.5 13.9 L8.1 8.9 H0.9 Z" fill="#fff"/></svg></div>
<div class="vl" style="left:380.6px;top:337px;height:311px"></div>

<!-- Result -->
<div class="h" style="left:399px;top:338.6px">Result</div>
<div class="ln" style="left:441px;top:347px;width:227px"></div>
<div class="t" style="left:405px;top:366.3px">Number of Sections</div>
<div class="abs" style="left:556.5px;top:362.2px;width:111.7px;height:22.3px;background:#47484c;border-radius:2.5px;color:#fff;font-size:11.7px;line-height:22.5px;text-align:center;padding-right:3px">13</div>
<div class="cb" style="left:402.7px;top:419.2px"></div><div class="t" style="left:426.8px;top:420.2px">Add as Regions</div>
<div class="t g" style="left:405px;top:446.8px">Region Name</div><div class="f g" style="left:556.5px;top:442.3px;width:111.7px;text-align:left;padding-left:2.8px">Steinberg Bi.-01<svg width="9" height="15"><path d="M4.5 1.1 L8.1 6.1 H0.9 Z M4.5 13.9 L8.1 8.9 H0.9 Z" fill="#9a9b9e"/></svg></div>
<div class="t g" style="left:405px;top:473.6px">Auto Number Start</div><div class="f g" style="left:556.5px;top:469.2px;width:111.7px">1<svg width="9" height="15"><path d="M4.5 1.1 L8.1 6.1 H0.9 Z M4.5 13.9 L8.1 8.9 H0.9 Z" fill="#9a9b9e"/></svg></div>
<div class="cb" style="left:402.7px;top:536.8px"></div><div class="t" style="left:426.8px;top:537.8px">Apply Fades</div>
<div class="f g" style="left:556.5px;top:533.4px;width:111.7px">0 ms<svg width="9" height="15"><path d="M4.5 1.1 L8.1 6.1 H0.9 Z M4.5 13.9 L8.1 8.9 H0.9 Z" fill="#9a9b9e"/></svg></div>
<div class="abs" style="left:399.4px;top:598.6px;width:138.6px;height:22.5px;background:#47484c;border-radius:3.5px;color:#fff;font-size:11.8px;line-height:20px;text-align:center;border:1px solid #505155">Analyze</div>
<div class="cb" style="left:556.6px;top:602.1px;border-width:2.1px"><svg width="15.5" height="15.5" style="left:-2.1px;top:-2.1px"><path d="M3.5 8.2 L7 12.4 L12 3.4" fill="none" stroke="#fff" stroke-width="1.9"/></svg></div><div class="t" style="left:580.3px;top:603px">Auto</div>
<div class="vl" style="left:686.4px;top:337px;height:311px"></div>

<!-- Processing -->
<div class="h" style="left:705px;top:338.6px">Processing</div>
<div class="ln" style="left:774px;top:347px;width:166px"></div>
<div class="rd" style="left:707.8px;top:365px"></div><div class="t" style="left:732.2px;top:366.3px">Strip Silence</div>
<div class="rd on" style="left:707.8px;top:391.9px"></div><div class="t" style="left:732.2px;top:393.3px">Split Silent Segments</div>
<div class="cb" style="left:737px;top:419.2px"></div><div class="t" style="left:761.6px;top:420.2px">Mute Silence</div>
<div class="abs" style="left:734px;top:442.4px;width:106.8px;height:22.1px;background:#111214"></div>
<div class="cb" style="left:737px;top:445.8px"><svg width="15.5" height="15.5"><path d="M3.4 8 L7.1 12.2 L11.8 3.3" fill="none" stroke="#8a8a8c" stroke-width="1.5"/></svg></div><div class="t" style="left:760.8px;top:446.8px">Select Silence</div>

<!-- buttons -->
<div class="btn" style="left:807.5px;top:687px;width:68.2px;background:#4d4d4d">Cancel</div>
<div class="btn" style="left:893.4px;top:687px;width:68.2px;background:linear-gradient(#3a86e8,#2a74d6);color:#fff">Process</div>
</div></body></html>
